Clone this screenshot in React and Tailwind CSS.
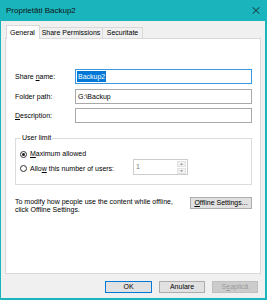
import React from 'react';

const Tab = ({ label, active, className = '' }) => (
  <div
    className={
      active
        ? `relative z-10 h-[14px] -mb-px bg-white border border-b-0 border-[#d9d9d9] flex items-center px-[3px] ${className}`
        : `h-[11px] bg-[#f0f0f0] border border-b-0 border-[#d9d9d9] flex items-center justify-center ${className}`
    }
  >
    {label}
  </div>
);

const FieldRow = ({ label, children, className = '' }) => (
  <div className={`flex items-center h-[15px] ${className}`}>
    <div className="w-[60px]">{label}</div>
    {children}
  </div>
);

const Radio = ({ checked }) => (
  <div className="w-[7px] h-[7px] rounded-full border border-[#333333] bg-white flex items-center justify-center shrink-0">
    {checked && <div className="w-[3px] h-[3px] rounded-full bg-[#1a1a1a]" />}
  </div>
);

const Button = ({ children, variant = 'normal', className = '' }) => {
  const look = {
    normal: 'bg-[#e1e1e1] border-[#adadad] text-black',
    focus: 'bg-[#e1e1e1] border-[#0078d7] text-black',
    disabled: 'bg-[#cccccc] border-[#bfbfbf] text-[#9a9a9a]',
  }[variant];
  return (
    <div className={`h-[12px] border flex items-center justify-center ${look} ${className}`}>
      {children}
    </div>
  );
};

export default function App() {
  return (
    <div className="w-[267px] h-[300px] bg-[#1ab4bd] flex flex-col font-['Liberation_Sans',Arial,sans-serif] text-[7px] leading-[8px] text-black select-none">
      {/* title bar */}
      <div className="h-[21px] shrink-0 flex items-center justify-between pl-[6px] pr-[7px] text-[8px] text-[#111]">
        <span>Proprietăți Backup2</span>
        <svg width="8" height="7" viewBox="0 0 8 7">
          <path d="M0.5 0.2L7.5 6.8M7.5 0.2L0.5 6.8" stroke="#1a1a1a" strokeWidth="0.9" fill="none" />
        </svg>
      </div>

      <div className="flex-1 bg-[#f0f0f0] ml-px mr-[2px] mb-[2px] flex flex-col pl-[4px] pt-[4px]">
        {/* tabs */}
        <div className="h-[13px] flex items-end pl-px">
          <Tab label="General" active className="w-[34px] pl-[3px]" />
          <Tab label="Share Permissions" className="w-[63px] border-l-0" />
          <Tab label="Securitate" className="w-[40px] border-l-0" />
        </div>

        {/* panel */}
        <div className="w-[256px] h-[236px] bg-white border border-[#d9d9d9] flex flex-col pt-[30px] pl-[9px]">
          <FieldRow label={<>Share <u>n</u>ame:</>}>
            <div className="w-[177px] h-[15px] border border-[#3c97e0] flex items-center pl-px">
              <span className="bg-[#0078d7] text-white h-[11px] flex items-center px-px">Backup2</span>
            </div>
          </FieldRow>
          <FieldRow label="Folder path:" className="mt-[5px]">
            <div className="w-[177px] h-[15px] border border-[#a9a9a9] flex items-center pl-[2px]">
              G:\Backup
            </div>
          </FieldRow>
          <FieldRow label={<><u>D</u>escription:</>} className="mt-[4px]">
            <div className="w-[177px] h-[15px] border border-[#a9a9a9] bg-white" />
          </FieldRow>

          {/* user limit group */}
          <fieldset className="mt-[11px] w-[237px] border border-[#dcdcdc] pb-[9px]">
            <legend className="ml-[5px] px-px leading-[8px]">User limit</legend>
            <div className="mt-[7px] h-[10px] flex items-center pl-[4px] gap-[3px]">
              <Radio checked />
              <span><u>M</u>aximum allowed</span>
            </div>
            <div className="h-[16px] flex items-center pl-[4px]">
              <div className="w-[113px] flex items-center gap-[3px] mt-[3px]">
                <Radio />
                <span>Allo<u>w</u> this number of users:</span>
              </div>
              <div className="w-[55px] h-[16px] border border-[#cccccc] bg-white flex items-center justify-between pl-[2px] pr-px">
                <span className="text-[#7a7a7a]">1</span>
                <div className="flex flex-col gap-px">
                  <div className="w-[9px] h-[6px] bg-[#f0f0f0] border border-[#e3e3e3] flex items-center justify-center">
                    <svg width="3" height="2" viewBox="0 0 3 2"><path d="M0 2L1.5 0L3 2Z" fill="#9a9a9a" /></svg>
                  </div>
                  <div className="w-[9px] h-[6px] bg-[#f0f0f0] border border-[#e3e3e3] flex items-center justify-center">
                    <svg width="3" height="2" viewBox="0 0 3 2"><path d="M0 0L1.5 2L3 0Z" fill="#9a9a9a" /></svg>
                  </div>
                </div>
              </div>
            </div>
          </fieldset>

          {/* offline */}
          <div className="mt-[12px] w-[237px] flex items-start justify-between">
            <div className="mt-px">
              To modify how people use the content while offline,
              <br />
              click Offline Settings.
            </div>
            <Button className="w-[62px] h-[11px]">
              <span><u>O</u>ffline Settings...</span>
            </Button>
          </div>
        </div>

        {/* dialog buttons */}
        <div className="mt-[7px] w-[253px] flex justify-end gap-[7px]">
          <Button variant="focus" className="w-[47px]">OK</Button>
          <Button className="w-[46px]">Anulare</Button>
          <Button variant="disabled" className="w-[46px]">S<u>e</u> aplică</Button>
        </div>
      </div>
    </div>
  );
}
